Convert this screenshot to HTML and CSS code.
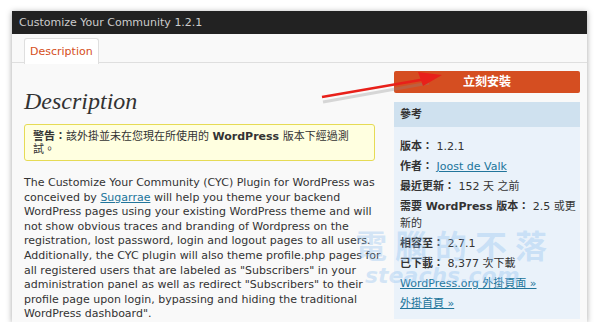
FILE: index.html
```html
<!DOCTYPE html>
<html lang="zh-Hant">
<head>
    <meta charset="UTF-8">
    <title>Customize Your Community 1.2.1</title>
    <link rel="stylesheet" href="styles.css">
</head>
<body>
<div class="window">
    <div class="titlebar">Customize Your Community 1.2.1</div>
    <div class="tabs">
        <a class="tab" href="#">Description</a>
    </div>
    <div class="content">
        <div class="main">
            <h2>Description</h2>
            <div class="warning"><b>警告：</b>該外掛並未在您現在所使用的 <b>WordPress</b> 版本下經過測試。</div>
            <p class="desc">The Customize Your Community (CYC) Plugin for WordPress was conceived by <a href="#">Sugarrae</a> will help you theme your backend WordPress pages using your existing WordPress theme and will not show obvious traces and branding of Wordpress on the registration, lost password, login and logout pages to all users. Additionally, the CYC plugin will also theme profile.php pages for all registered users that are labeled as "Subscribers" in your administration panel as well as redirect "Subscribers" to their profile page upon login, bypassing and hiding the traditional WordPress dashboard".</p>
        </div>
        <div class="side">
            <a class="install" href="#">立刻安裝</a>
            <div class="info">
                <h3>參考</h3>
                <ul>
                    <li><b>版本：</b> 1.2.1</li>
                    <li><b>作者：</b> <a href="#">Joost de Valk</a></li>
                    <li><b>最近更新：</b> 152 天 之前</li>
                    <li><b>需要 WordPress 版本：</b> 2.5 或更新的</li>
                    <li><b>相容至：</b> 2.7.1</li>
                    <li><b>已下載：</b> 8,377 次下載</li>
                    <li><a href="#">WordPress.org 外掛頁面 »</a></li>
                    <li><a href="#">外掛首頁 »</a></li>
                </ul>
            </div>
        </div>
    </div>
    <div class="mark">
        <span class="mark-cn">電腦的不落</span>
        <span class="mark-en">steachs.com</span>
    </div>
    <svg class="arrow" width="140" height="40" viewBox="0 0 140 40">
        <path d="M4 32 L110 13" stroke="#888" stroke-width="3" opacity="0.3" transform="translate(1 3)"/>
        <path d="M4 30 L108 12" stroke="#e8201a" stroke-width="2.5"/>
        <path d="M124 8 L100 5 L105 19 Z" fill="#e8201a"/>
    </svg>
</div>
</body>
</html>
```

FILE: styles.css
```css
*{
    padding:0;
    margin:0;
}
ul{
    list-style: none;
}
body{
    background-color: #fff;
    font-family: "DejaVu Sans", Verdana, "Noto Sans CJK TC", sans-serif;
    font-size: 11px;
    color: #333;
}
a{
    color: #21759b;
}
.window{
    position: relative;
    width: 575px;
    height: 311px;
    margin: 11px 0 0 12px;
    background-color: #f9f9f9;
    box-shadow: 0 1px 6px rgba(0,0,0,0.35);
    overflow: hidden;
}
.titlebar{
    height: 23px;
    line-height: 23px;
    padding-left: 7px;
    background-color: #222;
    color: #ccc;
    font-size: 11px;
}
.tabs{
    height: 29px;
    padding: 4px 0 0 12px;
    box-sizing: border-box;
    border-bottom: 1px solid #dfdfdf;
}
.tab{
    display: inline-block;
    height: 25px;
    line-height: 25px;
    padding: 0 5px;
    border: 1px solid #dfdfdf;
    border-bottom: none;
    border-radius: 3px 3px 0 0;
    background-color: #fff;
    color: #d54e21;
    font-size: 11px;
    text-decoration: none;
}
.content{
    display: flex;
    padding: 8px 7px 0 12px;
}
.main{
    width: 360px;
}
.main h2{
    margin-top: 15px;
    font-family: Georgia, "Liberation Serif", serif;
    font-style: italic;
    font-weight: normal;
    font-size: 24px;
    color: #333;
    line-height: 30px;
}
.warning{
    margin-top: 8px;
    width: 333px;
    padding: 5px 8px 4px 8px;
    background-color: #ffffe0;
    border: 1px solid #e6db55;
    border-radius: 3px;
    line-height: 13px;
}
.desc{
    margin-top: 15px;
    line-height: 14.6px;
}
.side{
    width: 186px;
    margin-left: 10px;
}
.install{
    display: block;
    height: 22px;
    line-height: 22px;
    background-color: #d54e21;
    border-radius: 2px;
    color: #fff;
    font-weight: bold;
    font-size: 12px;
    text-align: center;
    text-decoration: none;
}
.info{
    margin-top: 9px;
    background-color: #eaf2fa;
    height: 217px;
}
.info h3{
    height: 25px;
    line-height: 25px;
    padding-left: 6px;
    background-color: #cfe1ef;
    font-size: 11px;
    font-weight: bold;
    color: #333;
}
.info ul{
    padding: 11px 1px 0 6px;
}
.info li{
    line-height: 17px;
    margin-bottom: 3px;
}
.mark{
    position: absolute;
    left: 343px;
    top: 214px;
    display: flex;
    flex-direction: column;
    color: rgba(140,190,240,0.35);
    font-weight: bold;
    pointer-events: none;
}
.mark-cn{
    font-family: "Noto Sans CJK TC", sans-serif;
    font-size: 32px;
    letter-spacing: 8px;
    line-height: 38px;
}
.mark-en{
    font-style: italic;
    font-size: 22px;
    line-height: 26px;
    margin-left: 10px;
}
.arrow{
    position: absolute;
    left: 306px;
    top: 56px;
}
```
